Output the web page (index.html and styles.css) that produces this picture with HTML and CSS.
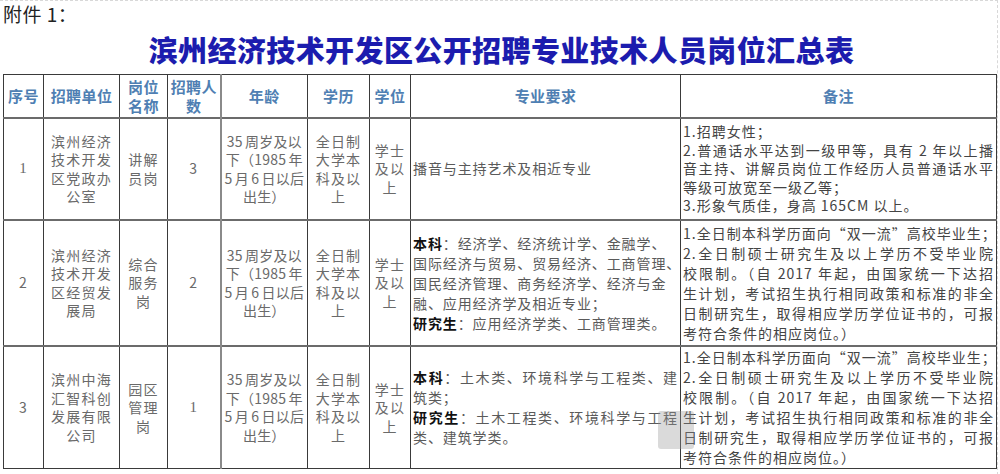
FILE: index.html
```html
<!DOCTYPE html>
<html lang="zh-CN">
<head>
<meta charset="utf-8">
<title>滨州经济技术开发区公开招聘专业技术人员岗位汇总表</title>
<link rel="stylesheet" href="styles.css">
</head>
<body>
<div class="page">
  <div class="note">附件 1：</div>
  <h1 class="title">滨州经济技术开发区公开招聘专业技术人员岗位汇总表</h1>
  <div class="table-wrap">
    <table class="jobs">
      <colgroup>
        <col class="c-no"><col class="c-unit"><col class="c-post"><col class="c-num"><col class="c-age"><col class="c-edu"><col class="c-deg"><col class="c-major"><col class="c-remark">
      </colgroup>
      <thead>
        <tr class="head">
          <th>序号</th>
          <th>招聘单位</th>
          <th>岗位<br>名称</th>
          <th>招聘人<br>数</th>
          <th class="thick-left">年龄</th>
          <th>学历</th>
          <th>学位</th>
          <th>专业要求</th>
          <th>备注</th>
        </tr>
      </thead>
      <tbody>
        <tr class="r1">
          <td class="serif">1</td>
          <td>滨州经济<br>技术开发<br>区党政办<br>公室</td>
          <td>讲解<br>员岗</td>
          <td>3</td>
          <td class="thick-left age">35 周岁及以<br>下（1985 年<br>5 月 6 日以后<br>出生）</td>
          <td>全日制<br>大学本<br>科及以<br>上</td>
          <td>学士<br>及以<br>上</td>
          <td class="major">播音与主持艺术及相近专业</td>
          <td class="remark"><span class="ln">1.招聘女性；</span><span class="ln j">2.普通话水平达到一级甲等，具有 2 年以上播</span><span class="ln j">音主持、讲解员岗位工作经历人员普通话水平</span><span class="ln">等级可放宽至一级乙等；</span><span class="ln">3.形象气质佳，身高 165CM 以上。</span></td>
        </tr>
        <tr class="r2">
          <td>2</td>
          <td>滨州经济<br>技术开发<br>区经贸发<br>展局</td>
          <td>综合<br>服务<br>岗</td>
          <td>2</td>
          <td class="thick-left age">35 周岁及以<br>下（1985 年<br>5 月 6 日以后<br>出生）</td>
          <td>全日制<br>大学本<br>科及以<br>上</td>
          <td>学士<br>及以<br>上</td>
          <td class="major"><span class="ln"><b>本科</b>：经济学、经济统计学、金融学、</span><span class="ln">国际经济与贸易、贸易经济、工商管理、</span><span class="ln">国民经济管理、商务经济学、经济与金</span><span class="ln">融、应用经济学及相近专业；</span><span class="ln"><b>研究生</b>：应用经济学类、工商管理类。</span></td>
          <td class="remark"><span class="ln j">1.全日制本科学历面向“双一流”高校毕业生；</span><span class="ln j">2.全日制硕士研究生及以上学历不受毕业院</span><span class="ln j">校限制。（自 2017 年起，由国家统一下达招</span><span class="ln j">生计划，考试招生执行相同政策和标准的非全</span><span class="ln j">日制研究生，取得相应学历学位证书的，可报</span><span class="ln">考符合条件的相应岗位。）</span></td>
        </tr>
        <tr class="r3">
          <td>3</td>
          <td>滨州中海<br>汇智科创<br>发展有限<br>公司</td>
          <td>园区<br>管理<br>岗</td>
          <td class="serif">1</td>
          <td class="thick-left age">35 周岁及以<br>下（1985 年<br>5 月 6 日以后<br>出生）</td>
          <td>全日制<br>大学本<br>科及以<br>上</td>
          <td>学士<br>及以<br>上</td>
          <td class="major"><span class="ln j"><b>本科</b>：土木类、环境科学与工程类、建</span><span class="ln">筑类；</span><span class="ln j"><b>研究生</b>：土木工程类、环境科学与工程</span><span class="ln">类、建筑学类。</span></td>
          <td class="remark"><span class="ln j">1.全日制本科学历面向“双一流”高校毕业生；</span><span class="ln j">2.全日制硕士研究生及以上学历不受毕业院</span><span class="ln j">校限制。（自 2017 年起，由国家统一下达招</span><span class="ln j">生计划，考试招生执行相同政策和标准的非全</span><span class="ln j">日制研究生，取得相应学历学位证书的，可报</span><span class="ln">考符合条件的相应岗位。）</span></td>
        </tr>
      </tbody>
    </table>
    <div class="watermark"></div>
  </div>
</div>
</body>
</html>
```

FILE: styles.css
```css
html, body {
  margin: 0;
  padding: 0;
  background: #ffffff;
}

body {
  font-family: "Noto Sans CJK SC", "Noto Sans", sans-serif;
  color: #555;
}

.page {
  width: 994px;
  height: 474px;
  padding-left: 3px;
  border-top: 1px dashed #d8d8d8;
  border-right: 1px dashed #d8d8d8;
  box-sizing: content-box;
  overflow: hidden;
}

.note {
  height: 26px;
  padding-top: 1px;
  line-height: 24px;
  font-size: 19px;
  color: #222;
  letter-spacing: 0.5px;
}

.title {
  margin: 0;
  height: 46px;
  line-height: 42px;
  font-size: 29px;
  font-weight: 900;
  color: #1c1cae;
  text-align: center;
  letter-spacing: 0.4px;
  padding-left: 3px;
}

.table-wrap {
  position: relative;
}

.jobs {
  width: 993px;
  table-layout: fixed;
  border-collapse: collapse;
  font-size: 14px;
  letter-spacing: 1.2px;
}

.c-no { width: 40px; }
.c-unit { width: 76px; }
.c-post { width: 48px; }
.c-num { width: 53px; }
.c-age { width: 87px; }
.c-edu { width: 62px; }
.c-deg { width: 41px; }
.c-major { width: 270px; }
.c-remark { width: 316px; }

.jobs th,
.jobs td {
  border: 1px solid #3a3a3a;
  padding: 0;
  text-align: center;
  vertical-align: middle;
  white-space: nowrap;
  overflow: hidden;
}

.jobs tbody tr {
  border-top: 2px solid #6b6b6b;
}

.jobs .thick-left {
  border-left: 2px solid #8a8a8a;
}

.head {
  height: 43px;
}

.head th {
  font-size: 15px;
  font-weight: 700;
  color: #4f7fb3;
  line-height: 19px;
  letter-spacing: 0.4px;
}

.r1 { height: 102px; }
.r2 { height: 126px; }
.r3 { height: 123px; }

.jobs td {
  color: #6a6a6a;
  line-height: 18.5px;
}

.jobs td.age {
  letter-spacing: 0.2px;
  word-spacing: -1px;
}

.jobs td.serif {
  font-family: "Liberation Serif", "Noto Sans CJK SC", serif;
  font-size: 15px;
}

.jobs td.major {
  text-align: left;
  padding-left: 2px;
  padding-right: 2px;
  color: #5a5a5a;
  letter-spacing: 0.9px;
}

.jobs td.major b {
  color: #111;
  font-weight: 700;
}

.jobs td.remark {
  text-align: left;
  padding-left: 2px;
  padding-right: 2px;
  color: #444;
  line-height: 20px;
  letter-spacing: 1px;
}

.r1 td.remark {
  line-height: 18.5px;
}

.ln {
  display: block;
  white-space: nowrap;
}

.major .ln {
  line-height: 20px;
}

.ln.j {
  text-align: justify;
  text-align-last: justify;
  text-justify: inter-character;
}

.watermark {
  position: absolute;
  left: 655px;
  top: 337px;
  width: 36px;
  height: 38px;
  border-radius: 3px;
  background: rgba(150, 150, 150, 0.35);
}
```
